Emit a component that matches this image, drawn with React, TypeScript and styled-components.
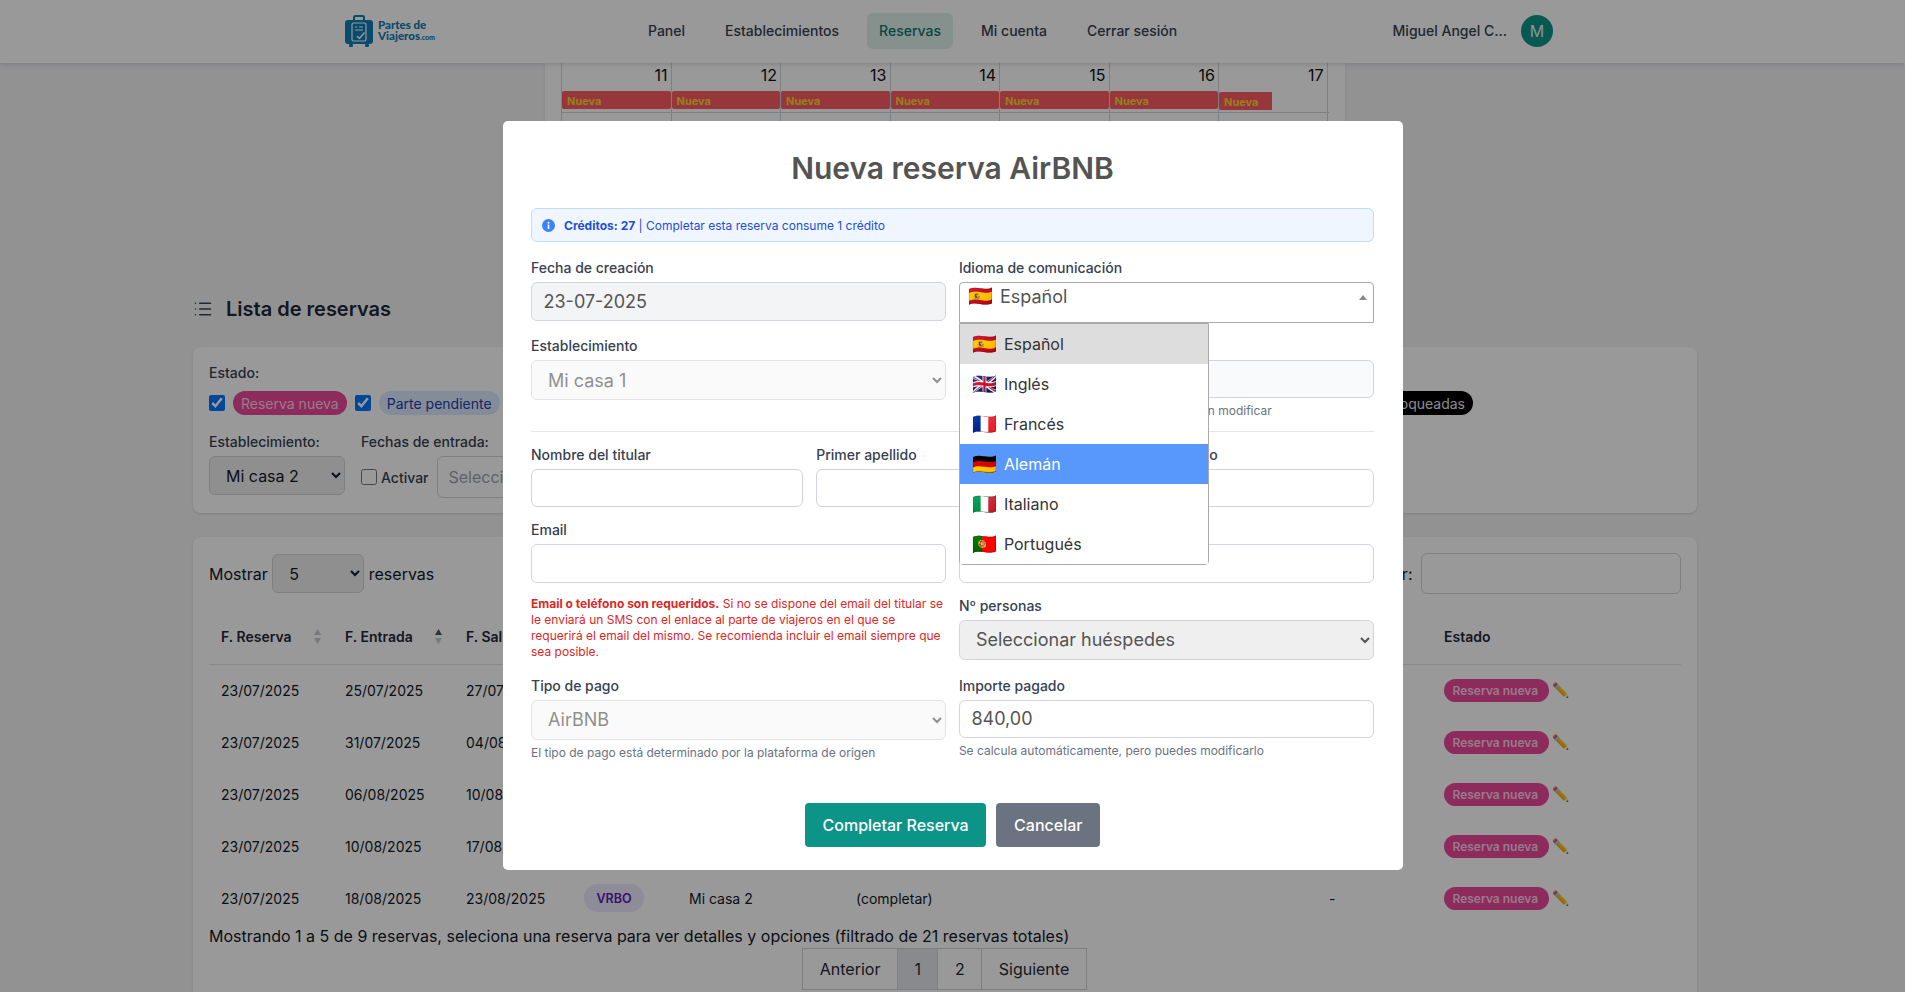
import React from "react";
import styled, { createGlobalStyle } from "styled-components";
import { List } from "lucide-react";

const GlobalStyle = createGlobalStyle`
  html, body {
    margin: 0;
    height: 100%;
    overflow: hidden;
    background: #f3f4f6;
    font-family: Inter, "Liberation Sans", sans-serif;
    color: #111827;
  }
  * { box-sizing: border-box; }
`;

const Header = styled.header`
  position: relative;
  z-index: 2;
  height: 63px;
  background: #fff;
  box-shadow: 0 2px 4px rgba(0, 0, 0, 0.12);
  display: flex;
  align-items: center;
  padding: 0 352px 1px 345px;
`;
const Logo = styled.div`
  width: 291px;
  display: flex;
  align-items: center;
  gap: 5px;
  color: #0e7db5;
`;
const LogoText = styled.div`
  font-family: Lato, sans-serif;
  font-size: 11.5px;
  line-height: 11px;
  font-weight: 900;
  small {
    font-size: 7px;
  }
`;
const Nav = styled.nav`
  display: flex;
  gap: 16px;
`;
const NavItem = styled.a<{ $active?: boolean }>`
  height: 36px;
  padding: 0 12px 1px;
  display: flex;
  align-items: center;
  border-radius: 6px;
  font-size: 14px;
  font-weight: 500;
  color: ${(p) => (p.$active ? "#0f766e" : "#374151")};
  background: ${(p) => (p.$active ? "#e0f2ec" : "transparent")};
`;
const User = styled.div`
  margin-left: auto;
  display: flex;
  align-items: center;
  gap: 14px;
`;
const UserName = styled.span`
  padding-bottom: 1px;
  font-size: 14px;
  font-weight: 500;
  color: #374151;
`;
const Avatar = styled.div`
  width: 32px;
  height: 32px;
  border-radius: 50%;
  background: #0d9488;
  color: #e5f5f3;
  display: flex;
  align-items: center;
  justify-content: center;
  font-size: 16px;
`;

const CalendarCard = styled.section`
  width: 800px;
  height: 207px;
  margin: 0 auto 0 545px;
  padding: 0 16px;
  background: #fff;
  box-shadow: 0 1px 3px rgba(0, 0, 0, 0.1);
`;
const Week = styled.div`
  display: grid;
  grid-template-columns: repeat(7, 109.5px);
  height: 50px;
  border-bottom: 1px solid #d1d5db;
`;
const EmptyWeek = styled(Week)`
  height: 100px;
`;
const DayCell = styled.div`
  border-left: 1px solid #d1d5db;
  &:last-child {
    border-right: 1px solid #d1d5db;
  }
`;
const DayNumber = styled.div`
  height: 28px;
  padding: 3px 3px 0 0;
  font-size: 16px;
  line-height: 18px;
  text-align: right;
  color: #111;
`;
const EventBar = styled.div<{ $short?: boolean }>`
  height: 18px;
  width: ${(p) => (p.$short ? "53px" : "100%")};
  margin-top: ${(p) => (p.$short ? "1px" : "0")};
  padding-left: 5px;
  border-radius: ${(p) => (p.$short ? "2px 0 0 2px" : "2px")};
  background: #fc5c65;
  color: #fed330;
  font-size: 11px;
  line-height: 21px;
  font-weight: 700;
`;

const Section = styled.section`
  width: 1504px;
  margin-left: 193px;
`;
const Heading = styled.h2`
  display: flex;
  align-items: center;
  gap: 13px;
  height: 28px;
  margin: 25px 0 24px;
  font-size: 20px;
  font-weight: 600;
  color: #1f2937;
  svg {
    color: #374151;
  }
`;
const Card = styled.div`
  background: #fff;
  border-radius: 8px;
  box-shadow: 0 1px 3px rgba(0, 0, 0, 0.12);
  padding: 16px;
`;
const FilterCard = styled(Card)`
  height: 166px;
  margin-bottom: 24px;
`;
const FilterLabel = styled.div`
  font-size: 14px;
  line-height: 20px;
  font-weight: 500;
  color: #374151;
`;
const PillRow = styled.div`
  width: 1264px;
  height: 24px;
  margin: 8px 0 17px;
  display: flex;
  align-items: center;
`;
const Check = styled.input`
  width: 16px;
  height: 16px;
  margin: 0 8px 0 0;
  flex: none;
`;
const Pill = styled.span<{ $bg: string; $fg: string; $end?: boolean }>`
  display: inline-flex;
  align-items: center;
  height: 24px;
  padding: 0 8px;
  margin-right: ${(p) => (p.$end ? "0" : "8px")};
  margin-left: ${(p) => (p.$end ? "auto" : "0")};
  border-radius: 12px;
  font-size: 14px;
  background: ${(p) => p.$bg};
  color: ${(p) => p.$fg};
  white-space: nowrap;
`;
const FilterRow = styled.div`
  display: flex;
  gap: 16px;
`;
const FilterColumn = styled.div`
  display: flex;
  flex-direction: column;
  gap: 4px;
`;
const NativeSelect = styled.select<{ $w: number }>`
  width: ${(p) => p.$w}px;
  height: 39px;
  padding: 0 12px;
  border: 1px solid #d1d5db;
  border-radius: 6px;
  background-color: #efefef;
  font: 400 16px Inter, sans-serif;
  color: #111827;
`;
const DateRow = styled.div`
  display: flex;
  align-items: center;
  gap: 4px;
  font-size: 14px;
  font-weight: 500;
  color: #374151;
`;
const EmptyCheck = styled(Check)`
  margin: 0;
`;
const DateInput = styled.input`
  width: 300px;
  height: 42px;
  margin-left: 4px;
  padding: 0 11px;
  border: 1px solid #d1d5db;
  border-radius: 6px;
  font: 400 16px Inter, sans-serif;
  background: #fff;
  &::placeholder {
    color: #9ca3af;
  }
`;
const TableCard = styled(Card)`
  height: 600px;
`;
const Toolbar = styled.div`
  display: flex;
  align-items: center;
  justify-content: space-between;
  font-size: 16px;
`;
const ToolbarGroup = styled.label`
  display: flex;
  align-items: center;
  gap: 4.5px;
`;
const SearchInput = styled.input`
  width: 260px;
  height: 41px;
  margin-left: 4px;
  border: 1px solid #d1d5db;
  border-radius: 6px;
  background: #fff;
`;
const Table = styled.table`
  width: 100%;
  margin-top: 16px;
  border-collapse: collapse;
  table-layout: fixed;
  font-size: 14px;
`;
const Th = styled.th<{ $w?: number }>`
  width: ${(p) => (p.$w ? `${p.$w}px` : "auto")};
  height: 54px;
  padding: 0 12px;
  text-align: left;
  font-weight: 600;
  color: #1f2937;
  border-bottom: 1px solid #e5e7eb;
`;
const HeadInner = styled.div`
  display: flex;
  align-items: center;
  justify-content: space-between;
`;
const Td = styled.td`
  height: 52px;
  padding: 0 12px;
  color: #111827;
  white-space: nowrap;
`;
const SourceBadge = styled.span`
  display: inline-flex;
  align-items: center;
  height: 28px;
  padding: 0 12.5px;
  border-radius: 14px;
  background: #ede9fe;
  color: #5b21b6;
  font-size: 12.5px;
  font-weight: 600;
`;
const StateBadge = styled.span`
  display: inline-flex;
  align-items: center;
  height: 23px;
  padding: 0 10.5px 0 8.5px;
  border-radius: 12px;
  background: #ec4899;
  color: #fbcfe8;
  font-size: 12px;
  font-weight: 600;
`;
const Pencil = styled.span`
  margin-left: 3.5px;
  font-size: 14px;
`;
const Summary = styled.div`
  font-size: 16px;
  line-height: 24px;
`;
const Pager = styled.div`
  display: flex;
  justify-content: center;
`;
const PageButton = styled.span<{ $active?: boolean }>`
  height: 42px;
  display: flex;
  align-items: center;
  padding: 0 16.5px;
  border: 1px solid #d1d5db;
  margin-left: -1px;
  font-size: 16px;
  color: #1f2937;
  background: ${(p) => (p.$active ? "#e5e7eb" : "transparent")};
`;

const Overlay = styled.div`
  position: fixed;
  inset: 0;
  z-index: 10;
  background: rgba(0, 0, 0, 0.4);
  display: flex;
  justify-content: center;
  align-items: flex-start;
  padding-top: 121px;
`;
const Modal = styled.div`
  width: 900px;
  height: 749px;
  padding: 29px 28.5px 0;
  background: #fff;
  border-radius: 5px;
`;
const Title = styled.h1`
  margin: 0 0 22px;
  font-size: 30px;
  line-height: 36px;
  font-weight: 600;
  color: #545454;
  text-align: center;
`;
const Notice = styled.div`
  height: 34px;
  margin-bottom: 16px;
  padding: 0 10px;
  display: flex;
  align-items: center;
  gap: 9px;
  background: #eff6ff;
  border: 1px solid #bfdbfe;
  border-radius: 6px;
  font-size: 12px;
  color: #1d4ed8;
  b {
    font-weight: 700;
  }
`;
const Stack = styled.div`
  display: flex;
  flex-direction: column;
  gap: 12.8px;
`;
const Columns = styled.div<{ $n: number; $late?: boolean }>`
  display: grid;
  grid-template-columns: repeat(${(p) => p.$n}, 1fr);
  gap: 12.8px;
  margin-top: ${(p) => (p.$late ? "2.6px" : "0")};
`;
const Field = styled.div`
  position: relative;
  min-width: 0;
`;
const Label = styled.label`
  display: block;
  height: 20px;
  margin-bottom: 4px;
  font-size: 14px;
  line-height: 20px;
  font-weight: 500;
  color: #374151;
`;
const TextInput = styled.input<{ $filled?: boolean }>`
  display: block;
  width: 100%;
  height: 38.7px;
  padding: 0 11.5px;
  border: 1px solid #d1d5db;
  border-radius: 6px;
  background: ${(p) => (p.$filled ? "#f3f4f6" : "#fff")};
  font: 400 18px Inter, sans-serif;
  color: #545454;
`;
const FormSelect = styled.select<{ $locked?: boolean }>`
  display: block;
  width: 100%;
  height: 40.6px;
  padding: 0 12px;
  border: 1px solid #d1d5db;
  border-radius: 6px;
  background-color: ${(p) => (p.$locked ? "#f8f8f8" : "#efefef")};
  font: 400 18px Inter, sans-serif;
  color: #545454;
  opacity: ${(p) => (p.$locked ? 0.65 : 1)};
`;
const LockedInput = styled(TextInput)`
  background: #f9fafb;
`;
const Help = styled.div`
  margin-top: 5.5px;
  font-size: 12px;
  line-height: 14px;
  color: #6b7280;
  white-space: nowrap;
`;
const Divider = styled.hr`
  width: 100%;
  margin: 0;
  border: none;
  border-top: 1px solid #e5e7eb;
`;
const Warning = styled.p`
  margin: 0;
  font-size: 12px;
  line-height: 16px;
  color: #dc2626;
  b {
    font-weight: 700;
  }
`;
const LangBox = styled.div`
  height: 41px;
  padding: 0 8px;
  display: flex;
  align-items: flex-start;
  border: 1px solid #aaa;
  border-radius: 4px 4px 0 0;
  font-size: 18px;
  line-height: 27px;
  color: #545454;
`;
const LangFlag = styled.span`
  width: 32px;
  font-size: 20px;
`;
const Caret = styled.span`
  margin: 12px -2px 0 auto;
  border: 4px solid transparent;
  border-top: 0;
  border-bottom: 5px solid #888;
`;
const LangMenu = styled.ul`
  position: absolute;
  z-index: 3;
  left: 0;
  top: 65px;
  width: 250px;
  margin: 0;
  padding: 0;
  list-style: none;
  background: #fff;
  border: 1px solid #aaa;
  border-radius: 0 0 4px 4px;
`;
const LangOption = styled.li<{ $state?: "current" | "hover" }>`
  height: 40px;
  padding-left: 12px;
  display: flex;
  align-items: center;
  font-size: 16px;
  color: ${(p) => (p.$state === "hover" ? "#fff" : "#333")};
  background: ${(p) =>
    p.$state === "hover" ? "#5897fb" : p.$state === "current" ? "#ddd" : "#fff"};
`;
const Actions = styled.div`
  display: flex;
  justify-content: center;
  gap: 10px;
  margin-top: 43px;
`;
const ActionButton = styled.button<{ $primary?: boolean }>`
  height: 44px;
  padding: 0 17.7px;
  border: none;
  border-radius: 4px;
  font: 500 16px Inter, sans-serif;
  color: #fff;
  background: ${(p) => (p.$primary ? "#0d9488" : "#6b7280")};
`;

function SuitcaseLogo() {
  return (
    <svg width="28" height="32" viewBox="0 0 28 32" fill="none">
      <path d="M9 5V2.5A1.5 1.5 0 0 1 10.5 1h7A1.5 1.5 0 0 1 19 2.5V5" stroke="currentColor" strokeWidth="2" />
      <rect x="0" y="5" width="28" height="24" rx="3" fill="currentColor" />
      <rect x="4" y="29" width="4" height="3" rx="1" fill="currentColor" />
      <rect x="20" y="29" width="4" height="3" rx="1" fill="currentColor" />
      <rect x="7" y="8" width="14" height="18" rx="1.5" stroke="#fff" strokeWidth="1.2" />
      <path d="M10 12h2M14 12h4M10 15h8" stroke="#fff" strokeWidth="1.2" />
      <path d="M12 21l2.5 2.5 5-6" stroke="#fff" strokeWidth="1.5" />
    </svg>
  );
}

function InfoDot() {
  return (
    <svg width="13" height="13" viewBox="0 0 13 13">
      <circle cx="6.5" cy="6.5" r="6.5" fill="#3b82f6" />
      <rect x="5.7" y="5.5" width="1.6" height="4.5" fill="#fff" />
      <circle cx="6.5" cy="3.7" r="1" fill="#fff" />
    </svg>
  );
}

function SortArrows({ active }: { active?: boolean }) {
  return (
    <svg width="7" height="15" viewBox="0 0 7 15">
      <path d="M3.5 0L7 6H0z" fill={active ? "#4b5563" : "#c7cad0"} />
      <path d="M3.5 15L0 9h7z" fill="#c7cad0" />
    </svg>
  );
}

const days = [11, 12, 13, 14, 15, 16, 17];
const languages = [
  { flag: "🇪🇸", name: "Español", state: "current" as const },
  { flag: "🇬🇧", name: "Inglés" },
  { flag: "🇫🇷", name: "Francés" },
  { flag: "🇩🇪", name: "Alemán", state: "hover" as const },
  { flag: "🇮🇹", name: "Italiano" },
  { flag: "🇵🇹", name: "Portugués" },
];
const bookings = [
  { entry: "25/07/2025", exit: "27/07/2025", source: "AirBNB" },
  { entry: "31/07/2025", exit: "04/08/2025", source: "AirBNB" },
  { entry: "06/08/2025", exit: "10/08/2025", source: "AirBNB" },
  { entry: "10/08/2025", exit: "17/08/2025", source: "AirBNB" },
  { entry: "18/08/2025", exit: "23/08/2025", source: "VRBO" },
];
const pills = [
  { text: "Parte pendiente", bg: "#dbeafe", fg: "#1e40af" },
  { text: "Completada", bg: "#d1fae5", fg: "#065f46" },
  { text: "Cancelada", bg: "#fee2e2", fg: "#991b1b" },
];

export default function App() {
  return (
    <>
      <GlobalStyle />
      <Header>
        <Logo>
          <SuitcaseLogo />
          <LogoText>
            Partes de
            <br />
            Viajeros<small>.com</small>
          </LogoText>
        </Logo>
        <Nav>
          <NavItem>Panel</NavItem>
          <NavItem>Establecimientos</NavItem>
          <NavItem $active>Reservas</NavItem>
          <NavItem>Mi cuenta</NavItem>
          <NavItem>Cerrar sesión</NavItem>
        </Nav>
        <User>
          <UserName>Miguel Angel C...</UserName>
          <Avatar>M</Avatar>
        </User>
      </Header>

      <CalendarCard>
        <Week>
          {days.map((d) => (
            <DayCell key={d}>
              <DayNumber>{d}</DayNumber>
              <EventBar $short={d === 17}>Nueva</EventBar>
            </DayCell>
          ))}
        </Week>
        <EmptyWeek>
          {days.map((d) => (
            <DayCell key={d} />
          ))}
        </EmptyWeek>
      </CalendarCard>

      <Section>
        <Heading>
          <List size={20} strokeWidth={1.8} />
          Lista de reservas
        </Heading>
        <FilterCard>
          <FilterLabel>Estado:</FilterLabel>
          <PillRow>
            <Check type="checkbox" defaultChecked />
            <Pill $bg="#ec4899" $fg="#fbcfe8">Reserva nueva</Pill>
            {pills.map((p) => (
              <React.Fragment key={p.text}>
                <Check type="checkbox" defaultChecked />
                <Pill $bg={p.bg} $fg={p.fg}>{p.text}</Pill>
              </React.Fragment>
            ))}
            <Pill $bg="#000" $fg="#e5e7eb" $end>Fechas bloqueadas</Pill>
          </PillRow>
          <FilterRow>
            <FilterColumn>
              <FilterLabel>Establecimiento:</FilterLabel>
              <NativeSelect $w={136} defaultValue="Mi casa 2">
                <option>Mi casa 1</option>
                <option>Mi casa 2</option>
              </NativeSelect>
            </FilterColumn>
            <FilterColumn>
              <FilterLabel>Fechas de entrada:</FilterLabel>
              <DateRow>
                <EmptyCheck type="checkbox" />
                Activar
                <DateInput placeholder="Seleccionar fechas" />
              </DateRow>
            </FilterColumn>
          </FilterRow>
        </FilterCard>

        <TableCard>
          <Toolbar>
            <ToolbarGroup>
              Mostrar
              <NativeSelect $w={92} defaultValue="5">
                <option>5</option>
                <option>10</option>
              </NativeSelect>
              reservas
            </ToolbarGroup>
            <ToolbarGroup>
              Buscar:
              <SearchInput />
            </ToolbarGroup>
          </Toolbar>
          <Table>
            <thead>
              <tr>
                <Th $w={124}>
                  <HeadInner>F. Reserva<SortArrows /></HeadInner>
                </Th>
                <Th $w={121}>
                  <HeadInner>F. Entrada<SortArrows active /></HeadInner>
                </Th>
                <Th $w={118}>F. Salida</Th>
                <Th $w={105}>Canal</Th>
                <Th $w={167}>Establecimiento</Th>
                <Th $w={473}>Titular</Th>
                <Th $w={115}>Importe</Th>
                <Th>Estado</Th>
              </tr>
            </thead>
            <tbody>
              {bookings.map((b) => (
                <tr key={b.entry}>
                  <Td>23/07/2025</Td>
                  <Td>{b.entry}</Td>
                  <Td>{b.exit}</Td>
                  <Td>
                    <SourceBadge>{b.source}</SourceBadge>
                  </Td>
                  <Td>Mi casa 2</Td>
                  <Td>(completar)</Td>
                  <Td>-</Td>
                  <Td>
                    <StateBadge>Reserva nueva</StateBadge>
                    <Pencil>✏️</Pencil>
                  </Td>
                </tr>
              ))}
            </tbody>
          </Table>
          <Summary>
            Mostrando 1 a 5 de 9 reservas, seleciona una reserva para ver detalles y opciones (filtrado de 21 reservas totales)
          </Summary>
          <Pager>
            <PageButton>Anterior</PageButton>
            <PageButton $active>1</PageButton>
            <PageButton>2</PageButton>
            <PageButton>Siguiente</PageButton>
          </Pager>
        </TableCard>
      </Section>

      <Overlay>
        <Modal>
          <Title>Nueva reserva AirBNB</Title>
          <Notice>
            <InfoDot />
            <span>
              <b>Créditos: 27</b> | Completar esta reserva consume 1 crédito
            </span>
          </Notice>
          <Stack>
            <Columns $n={2}>
              <Field>
                <Label>Fecha de creación</Label>
                <TextInput $filled defaultValue="23-07-2025" readOnly />
              </Field>
              <Field>
                <Label>Idioma de comunicación</Label>
                <LangBox>
                  <LangFlag>🇪🇸</LangFlag>
                  Español
                  <Caret />
                </LangBox>
                <LangMenu>
                  {languages.map((l) => (
                    <LangOption key={l.name} $state={l.state}>
                      <LangFlag>{l.flag}</LangFlag>
                      {l.name}
                    </LangOption>
                  ))}
                </LangMenu>
              </Field>
            </Columns>
            <Columns $n={2}>
              <Field>
                <Label>Establecimiento</Label>
                <FormSelect $locked disabled>
                  <option>Mi casa 1</option>
                </FormSelect>
              </Field>
              <Field>
                <Label>Fechas de la estancia</Label>
                <LockedInput readOnly />
                <Help>Se obtienen desde la reserva y no se pueden modificar</Help>
              </Field>
            </Columns>
            <Divider />
            <Columns $n={3}>
              <Field>
                <Label>Nombre del titular</Label>
                <TextInput />
              </Field>
              <Field>
                <Label>Primer apellido</Label>
                <TextInput />
              </Field>
              <Field>
                <Label>Segundo apellido</Label>
                <TextInput />
              </Field>
            </Columns>
            <Columns $n={2}>
              <Field>
                <Label>Email</Label>
                <TextInput />
              </Field>
              <Field>
                <Label>Teléfono</Label>
                <TextInput />
              </Field>
            </Columns>
            <Columns $n={2}>
              <Warning>
                <b>Email o teléfono son requeridos.</b> Si no se dispone del email del titular se le enviará un SMS con el enlace al parte de viajeros en el que se requerirá el email del mismo. Se recomienda incluir el email siempre que sea posible.
              </Warning>
              <Field>
                <Label>Nº personas</Label>
                <FormSelect>
                  <option>Seleccionar huéspedes</option>
                </FormSelect>
              </Field>
            </Columns>
            <Columns $n={2} $late>
              <Field>
                <Label>Tipo de pago</Label>
                <FormSelect $locked disabled>
                  <option>AirBNB</option>
                </FormSelect>
                <Help>El tipo de pago está determinado por la plataforma de origen</Help>
              </Field>
              <Field>
                <Label>Importe pagado</Label>
                <TextInput defaultValue="840,00" />
                <Help>Se calcula automáticamente, pero puedes modificarlo</Help>
              </Field>
            </Columns>
          </Stack>
          <Actions>
            <ActionButton $primary>Completar Reserva</ActionButton>
            <ActionButton>Cancelar</ActionButton>
          </Actions>
        </Modal>
      </Overlay>
    </>
  );
}
